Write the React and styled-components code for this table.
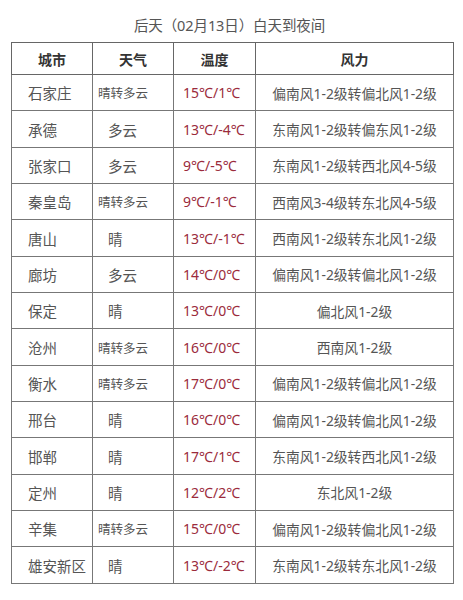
import React from 'react';
import styled, { createGlobalStyle } from 'styled-components';

const GlobalStyle = createGlobalStyle`
  html, body {
    margin: 0;
    padding: 0;
    background: #fff;
  }
  body {
    font-family: "Noto Sans", "Noto Sans CJK SC", sans-serif;
  }
`;

const rows = [
  ['石家庄', '晴转多云', '15℃/1℃', '偏南风1-2级转偏北风1-2级'],
  ['承德', '多云', '13℃/-4℃', '东南风1-2级转偏东风1-2级'],
  ['张家口', '多云', '9℃/-5℃', '东南风1-2级转西北风4-5级'],
  ['秦皇岛', '晴转多云', '9℃/-1℃', '西南风3-4级转东北风4-5级'],
  ['唐山', '晴', '13℃/-1℃', '西南风1-2级转东北风1-2级'],
  ['廊坊', '多云', '14℃/0℃', '偏南风1-2级转偏北风1-2级'],
  ['保定', '晴', '13℃/0℃', '偏北风1-2级'],
  ['沧州', '晴转多云', '16℃/0℃', '西南风1-2级'],
  ['衡水', '晴转多云', '17℃/0℃', '偏南风1-2级转偏北风1-2级'],
  ['邢台', '晴', '16℃/0℃', '偏南风1-2级转偏北风1-2级'],
  ['邯郸', '晴', '17℃/1℃', '东南风1-2级转西北风1-2级'],
  ['定州', '晴', '12℃/2℃', '东北风1-2级'],
  ['辛集', '晴转多云', '15℃/0℃', '偏南风1-2级转偏北风1-2级'],
  ['雄安新区', '晴', '13℃/-2℃', '东南风1-2级转东北风1-2级'],
];

const Page = styled.div`
  width: 463px;
  padding-top: 15px;
`;

const Title = styled.div`
  text-align: center;
  font-size: 14.5px;
  line-height: 20px;
  color: #555;
  margin-bottom: 7px;
  letter-spacing: -0.1px;
  padding-right: 4px;
`;

const Table = styled.table`
  margin-left: 11px;
  width: 442px;
  height: 542px;
  border-collapse: collapse;
  table-layout: fixed;
  border: 1.5px solid #666;
`;

const HeadCell = styled.th`
  height: 31px;
  padding: 0;
  border: 1px solid #666;
  font-size: 14px;
  font-weight: 700;
  color: #333;
  text-align: center;
`;

const Cell = styled.td`
  height: 35px;
  padding: 0 0 0 ${(p) => p.$pad || 0}px;
  border: 1px solid #777;
  font-size: ${(p) => p.$size || 14.5}px;
  color: ${(p) => p.$color || '#555'};
  text-align: ${(p) => p.$align || 'left'};
  white-space: nowrap;
  overflow: hidden;
`;

export default function App() {
  return (
    <Page>
      <GlobalStyle />
      <Title>后天（02月13日）白天到夜间</Title>
      <Table>
        <colgroup>
          <col style={{ width: 81 }} />
          <col style={{ width: 81 }} />
          <col style={{ width: 82 }} />
          <col style={{ width: 198 }} />
        </colgroup>
        <thead>
          <tr>
            <HeadCell>城市</HeadCell>
            <HeadCell>天气</HeadCell>
            <HeadCell>温度</HeadCell>
            <HeadCell>风力</HeadCell>
          </tr>
        </thead>
        <tbody>
          {rows.map(([city, weather, temp, wind]) => {
            const long = weather.length > 2;
            return (
              <tr key={city}>
                <Cell $pad={16}>{city}</Cell>
                <Cell $pad={long ? 5 : 15} $size={long ? 12.5 : 14.5}>
                  {weather}
                </Cell>
                <Cell $pad={9} $size={14} $color="#9b2b3c">
                  {temp}
                </Cell>
                <Cell $align="center" $size={13.8}>
                  {wind}
                </Cell>
              </tr>
            );
          })}
        </tbody>
      </Table>
    </Page>
  );
}
